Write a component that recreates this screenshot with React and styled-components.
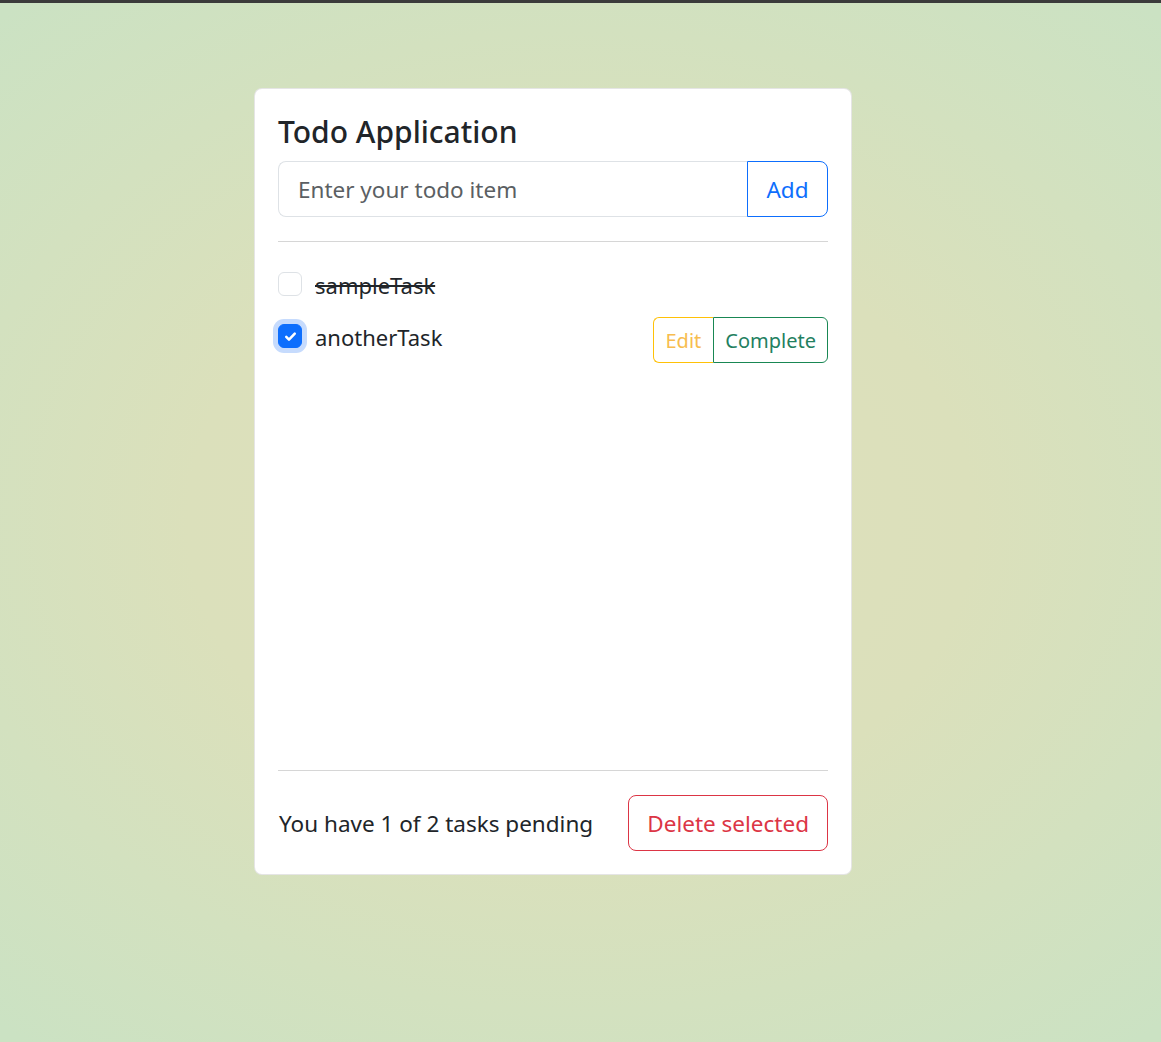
import styled, { createGlobalStyle } from "styled-components";
import { useState } from "react";

const GlobalStyle = createGlobalStyle`
    * { box-sizing: border-box; }
    html, body { margin: 0; padding: 0; }
    body {
        min-height: 1042px;
        border-top: 3px solid #3b3b3b;
        font-family: "Noto Sans", "Open Sans", sans-serif;
        color: #212529;
        background: radial-gradient(ellipse 75% 65% at 50% 50%, #e0e0bb 0%, #dbe0bb 45%, #cbe2c3 100%);
    }
`;

const Page = styled.div`
    padding: 85px 0 0 254px;
`;

const Card = styled.div`
    width: 598px;
    height: 787px;
    background: #ffffff;
    border: 1px solid rgba(0, 0, 0, 0.1);
    border-radius: 8px;
    padding: 23px 23px;
    display: flex;
    flex-direction: column;
`;

const Title = styled.h3`
    margin: 2px 0 11px 0;
    font-size: 30px;
    font-weight: 500;
    line-height: 36px;
`;

const InputGroup = styled.div`
    display: flex;
    height: 56px;
`;

const TodoInput = styled.input`
    flex: 1;
    min-width: 0;
    border: 1px solid #dee2e6;
    border-right: none;
    border-radius: 8px 0 0 8px;
    padding: 0 19px;
    font-family: inherit;
    font-size: 22.5px;
    color: #212529;
    outline: none;

    &::placeholder {
        color: #5b5f63;
    }
`;

const OutlineButton = styled.button`
    font-family: inherit;
    background: #ffffff;
    border: 1px solid ${(p) => p.$color};
    color: ${(p) => p.$text || p.$color};
    font-size: ${(p) => p.$size || 22.5}px;
    padding: 0 ${(p) => p.$pad || 18}px;
    cursor: pointer;
`;

const AddButton = styled(OutlineButton)`
    width: 81px;
    padding: 0;
    border-radius: 0 8px 8px 0;
`;

const Divider = styled.hr`
    margin: 24px 0;
    border: none;
    border-top: 1px solid #d6d6d6;
`;

const List = styled.div`
    flex: 1;
    display: flex;
    flex-direction: column;
    gap: 16px;
    padding-top: 3px;
`;

const Row = styled.div`
    display: flex;
    justify-content: space-between;
    align-items: flex-start;
`;

const Label = styled.label`
    display: flex;
    align-items: flex-start;
    gap: 13px;
    font-size: 22px;
    line-height: 32px;
    padding-top: ${(p) => (p.$offset ? 4 : 0)}px;
    text-decoration: ${(p) => (p.$done ? "line-through" : "none")};
`;

const Check = styled.span`
    flex: none;
    width: 24px;
    height: 24px;
    margin-top: 3px;
    border-radius: 6px;
    border: 1px solid ${(p) => (p.$checked ? "#0d6efd" : "#dee2e6")};
    background: ${(p) => (p.$checked ? "#0d6efd" : "#fff")};
    box-shadow: ${(p) => (p.$checked ? "0 0 0 5px #c6dbfd" : "none")};
    display: flex;
    align-items: center;
    justify-content: center;
`;

const ButtonGroup = styled.div`
    display: flex;
    height: 46px;

    button:first-child { border-radius: 6px 0 0 6px; border-right: none; }
    button:last-child { border-radius: 0 6px 6px 0; }
`;

const Footer = styled.div`
    display: flex;
    justify-content: space-between;
    align-items: center;
`;

const Pending = styled.span`
    font-size: 22.5px;
    padding-left: 1px;
`;

const DeleteButton = styled(OutlineButton)`
    height: 56px;
    border-radius: 8px;
`;

function CheckMark() {
    return (
        <svg width="17" height="17" viewBox="0 0 20 20">
            <path fill="none" stroke="#fff" strokeLinecap="round" strokeLinejoin="round" strokeWidth="3" d="M5 10.5l3.2 3.2 6.8-7" />
        </svg>
    );
}

export default function App() {
    const [tasks] = useState([
        { name: "sampleTask", done: true, selected: false },
        { name: "anotherTask", done: false, selected: true },
    ]);
    const pending = tasks.filter((t) => !t.done).length;

    return (
        <Page>
            <GlobalStyle />
            <Card>
                <Title>Todo Application</Title>
                <InputGroup>
                    <TodoInput placeholder="Enter your todo item" />
                    <AddButton $color="#0d6efd">Add</AddButton>
                </InputGroup>
                <Divider />
                <List>
                    {tasks.map((t) => (
                        <Row key={t.name}>
                            <Label $done={t.done} $offset={!t.done}>
                                <Check $checked={t.selected}>{t.selected && <CheckMark />}</Check>
                                {t.name}
                            </Label>
                            {!t.done && (
                                <ButtonGroup>
                                    <OutlineButton $color="#ffc107" $text="#f7bd4f" $size={20} $pad={12}>Edit</OutlineButton>
                                    <OutlineButton $color="#198754" $text="#23805f" $size={20} $pad={11}>Complete</OutlineButton>
                                </ButtonGroup>
                            )}
                        </Row>
                    ))}
                </List>
                <Divider />
                <Footer>
                    <Pending>You have {pending} of {tasks.length} tasks pending</Pending>
                    <DeleteButton $color="#dc3545" $pad={18}>Delete selected</DeleteButton>
                </Footer>
            </Card>
        </Page>
    );
}
